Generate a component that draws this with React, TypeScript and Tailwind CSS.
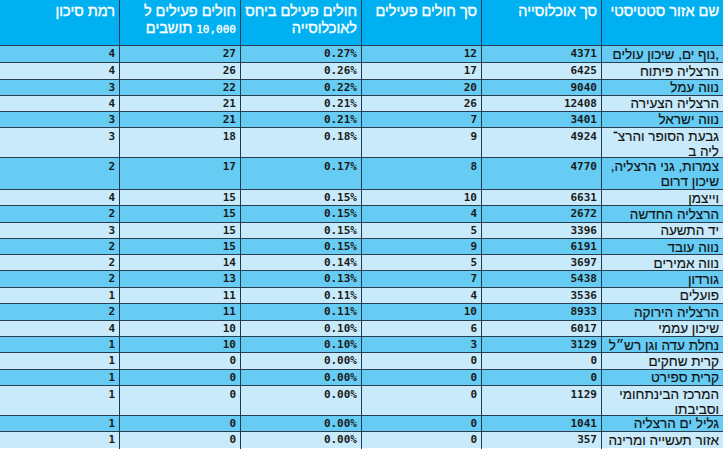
import React from "react";

type Row = { name: string[]; pop: number; sick: number; pct: string; per: number; risk: number; h: string };

const rows: Row[] = [
  { name: [",נוף ים, שיכון עולים"], pop: 4371, sick: 12, pct: "0.27%", per: 27, risk: 4, h: "h-[17px]" },
  { name: ["הרצליה פיתוח"], pop: 6425, sick: 17, pct: "0.26%", per: 26, risk: 4, h: "h-[16.5px]" },
  { name: ["נווה עמל"], pop: 9040, sick: 20, pct: "0.22%", per: 22, risk: 3, h: "h-[16px]" },
  { name: ["הרצליה הצעירה"], pop: 12408, sick: 26, pct: "0.21%", per: 21, risk: 4, h: "h-[16px]" },
  { name: ["נווה ישראל"], pop: 3401, sick: 7, pct: "0.21%", per: 21, risk: 3, h: "h-[16.5px]" },
  { name: ["גבעת הסופר והרצ־", "ליה ב"], pop: 4924, sick: 9, pct: "0.18%", per: 18, risk: 3, h: "h-[29.5px]" },
  { name: ["צמרות, גני הרצליה,", "שיכון דרום"], pop: 4770, sick: 8, pct: "0.17%", per: 17, risk: 2, h: "h-[32.5px]" },
  { name: ["וייצמן"], pop: 6631, sick: 10, pct: "0.15%", per: 15, risk: 4, h: "h-[16px]" },
  { name: ["הרצליה החדשה"], pop: 2672, sick: 4, pct: "0.15%", per: 15, risk: 2, h: "h-[16.5px]" },
  { name: ["יד התשעה"], pop: 3396, sick: 5, pct: "0.15%", per: 15, risk: 3, h: "h-[16.5px]" },
  { name: ["נווה עובד"], pop: 6191, sick: 9, pct: "0.15%", per: 15, risk: 2, h: "h-[16px]" },
  { name: ["נווה אמירים"], pop: 3697, sick: 5, pct: "0.14%", per: 14, risk: 2, h: "h-[16px]" },
  { name: ["גורדון"], pop: 5438, sick: 7, pct: "0.13%", per: 13, risk: 2, h: "h-[16.5px]" },
  { name: ["פועלים"], pop: 3536, sick: 4, pct: "0.11%", per: 11, risk: 1, h: "h-[16.5px]" },
  { name: ["הרצליה הירוקה"], pop: 8933, sick: 10, pct: "0.11%", per: 11, risk: 2, h: "h-[16.5px]" },
  { name: ["שיכון עממי"], pop: 6017, sick: 6, pct: "0.10%", per: 10, risk: 4, h: "h-[16.5px]" },
  { name: ["נחלת עדה וגן רש״ל"], pop: 3129, sick: 3, pct: "0.10%", per: 10, risk: 1, h: "h-[16px]" },
  { name: ["קרית שחקים"], pop: 0, sick: 0, pct: "0.00%", per: 0, risk: 1, h: "h-[16.5px]" },
  { name: ["קרית ספירט"], pop: 0, sick: 0, pct: "0.00%", per: 0, risk: 1, h: "h-[16px]" },
  { name: ["המרכז הבינתחומי", "וסביבתו"], pop: 1129, sick: 0, pct: "0.00%", per: 0, risk: 1, h: "h-[30px]" },
  { name: ["גליל ים הרצליה"], pop: 1041, sick: 0, pct: "0.00%", per: 0, risk: 1, h: "h-[16.5px]" },
  { name: ["אזור תעשייה ומרינה"], pop: 357, sick: 0, pct: "0.00%", per: 0, risk: 1, h: "h-[17px]" },
];

const grid = "grid grid-cols-[122px_120px_120px_121px_121px_119px]";
const heb = "font-['Liberation_Sans',sans-serif]";
const num = "font-['DejaVu_Sans_Mono',monospace] font-bold text-[11px] text-[#1a1a1a]";
const hcell = "pr-1 pt-[3px] border-l border-[#1d3b55] whitespace-nowrap";

export default function App() {
  return (
    <div dir="rtl" className="w-[723px] h-[451px] overflow-hidden bg-white">
      <div className={`${grid} h-[45px] bg-[#00b0f0] text-white text-[14.5px] leading-[17px] [-webkit-text-stroke:0.35px_white] ${heb}`}>
        <div className={hcell}>שם אזור סטטיסטי</div>
        <div className={hcell}>סך אוכלוסייה</div>
        <div className={hcell}>סך חולים פעילים</div>
        <div className={hcell}>
          חולים פעילם ביחס
          <br />
          לאוכלוסייה
        </div>
        <div className={hcell}>
          חולים פעילים ל
          <br />
          <span className="font-['DejaVu_Sans_Mono',monospace] text-[11px]">10,000</span> תושבים
        </div>
        <div className="pr-1 pt-[3px] whitespace-nowrap">רמת סיכון</div>
      </div>
      {rows.map((r, i) => {
        const multi = r.name.length > 1;
        const bg = i % 2 === 0 ? "bg-[#66ccf4]" : "bg-[#c8eafa]";
        const align = multi ? "items-start pt-px" : "items-center";
        const ncell = `pr-1 border-l border-[#1d3b55] flex justify-end ${align} ${num}`;
        return (
          <div key={i} className={`${grid} ${r.h} ${bg} border-t border-[#2a3e50]`}>
            <div className={`pr-1 border-l border-[#1d3b55] flex ${align} text-[13.5px] leading-[15px] text-[#111] [-webkit-text-stroke:0.15px_#111] ${heb}`}>
              <div>
                {r.name.map((n, j) => (
                  <div key={j}>{n}</div>
                ))}
              </div>
            </div>
            <div dir="ltr" className={ncell}>{r.pop}</div>
            <div dir="ltr" className={ncell}>{r.sick}</div>
            <div dir="ltr" className={ncell}>{r.pct}</div>
            <div dir="ltr" className={ncell}>{r.per}</div>
            <div dir="ltr" className={`pr-1 flex justify-end ${align} ${num}`}>{r.risk}</div>
          </div>
        );
      })}
    </div>
  );
}
